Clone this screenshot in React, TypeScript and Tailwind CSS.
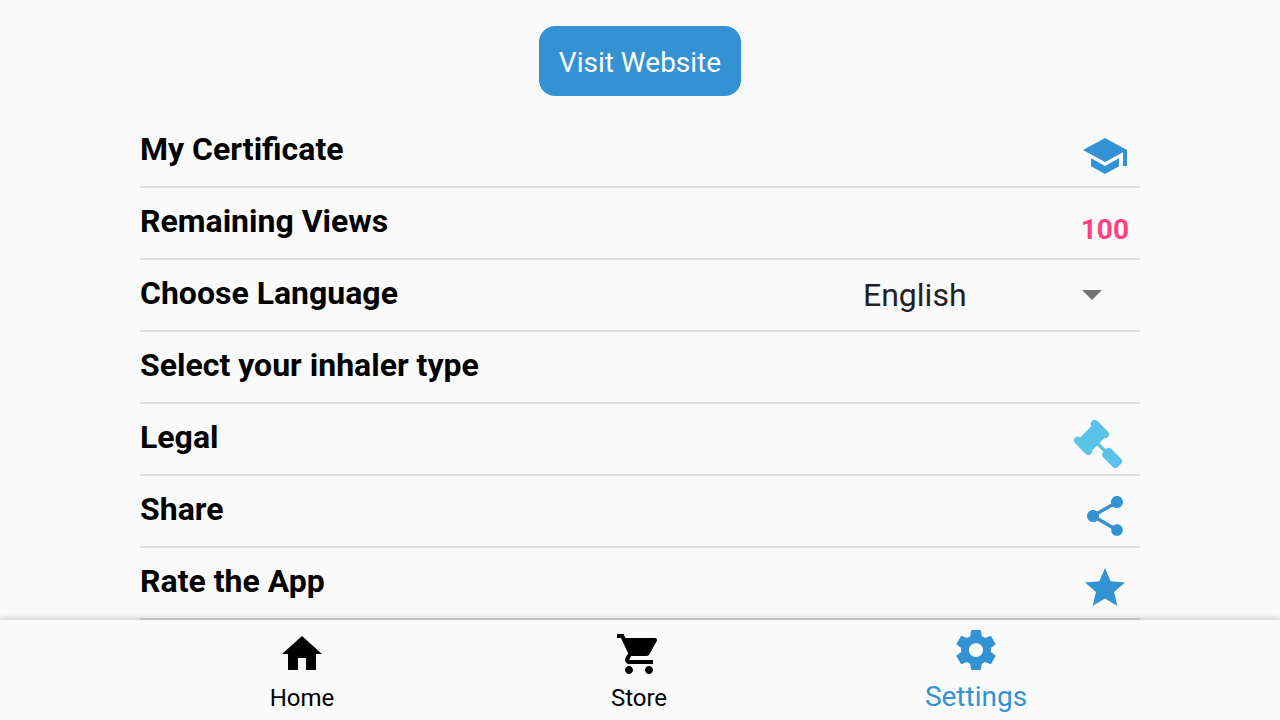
import { useState, type ReactNode } from "react";

const icons = {
  school:
    "M5 13.18v4L12 21l7-3.82v-4L12 17l-7-3.82zM12 3L1 9l11 6 9-4.91V17h2V9L12 3z",
  share:
    "M18 16.08c-.76 0-1.44.3-1.96.77L8.91 12.7c.05-.23.09-.46.09-.7s-.04-.47-.09-.7l7.05-4.11c.54.5 1.25.81 2.04.81 1.66 0 3-1.34 3-3s-1.34-3-3-3-3 1.34-3 3c0 .24.04.47.09.7L8.04 9.81C7.5 9.31 6.79 9 6 9c-1.66 0-3 1.34-3 3s1.34 3 3 3c.79 0 1.5-.31 2.04-.81l7.12 4.16c-.05.21-.08.43-.08.65 0 1.61 1.31 2.92 2.92 2.92 1.61 0 2.92-1.31 2.92-2.92s-1.31-2.92-2.92-2.92z",
  star: "M12 17.27L18.18 21l-1.64-7.03L22 9.24l-7.19-.61L12 2 9.19 8.63 2 9.24l5.46 4.73L5.82 21z",
  home: "M10 20v-6h4v6h5v-8h3L12 3 2 12h3v8z",
  cart: "M7 18c-1.1 0-1.99.9-1.99 2S5.9 22 7 22s2-.9 2-2-.9-2-2-2zM1 2v2h2l3.6 7.59-1.35 2.45c-.16.28-.25.61-.25.96 0 1.1.9 2 2 2h12v-2H7.42c-.14 0-.25-.11-.25-.25l.03-.12.9-1.63h7.45c.75 0 1.41-.41 1.75-1.03l3.58-6.49c.08-.14.12-.31.12-.48 0-.55-.45-1-1-1H5.21l-.94-2H1zm16 16c-1.1 0-1.99.9-1.99 2s.89 2 1.99 2 2-.9 2-2-.9-2-2-2z",
  settings:
    "M19.43 12.98c.04-.32.07-.64.07-.98s-.03-.66-.07-.98l2.11-1.65c.19-.15.24-.42.12-.64l-2-3.46c-.12-.22-.39-.3-.61-.22l-2.49 1c-.52-.4-1.08-.73-1.69-.98l-.38-2.65C14.46 2.18 14.25 2 14 2h-4c-.25 0-.46.18-.49.42l-.38 2.65c-.61.25-1.17.59-1.69.98l-2.49-1c-.23-.09-.49 0-.61.22l-2 3.46c-.13.22-.07.49.12.64l2.11 1.65c-.04.32-.07.65-.07.98s.03.66.07.98l-2.11 1.65c-.19.15-.24.42-.12.64l2 3.46c.12.22.39.3.61.22l2.49-1c.52.4 1.08.73 1.69.98l.38 2.65c.03.24.24.42.49.42h4c.25 0 .46-.18.49-.42l.38-2.65c.61-.25 1.17-.59 1.69-.98l2.49 1c.23.09.49 0 .61-.22l2-3.46c.12-.22.07-.49-.12-.64l-2.11-1.65zM12 15.5c-1.93 0-3.5-1.57-3.5-3.5s1.57-3.5 3.5-3.5 3.5 1.57 3.5 3.5-1.57 3.5-3.5 3.5z",
};

function Icon({ name }: { name: keyof typeof icons }) {
  return (
    <svg viewBox="0 0 24 24" className="size-12 shrink-0" fill="currentColor" aria-hidden="true">
      <path d={icons[name]} />
    </svg>
  );
}

function Gavel() {
  return (
    <svg viewBox="0 0 48 48" className="size-12 text-[#5bc2e9]" fill="currentColor" aria-hidden="true">
      <path d="M18 5.5 5.5 18 18 30.5 30.5 18z" />
      <g stroke="currentColor" strokeLinecap="round">
        <path d="M20.6 3.9 31.1 14.2M3.9 20.6 14.2 31.1" strokeWidth="7.8" />
        <path d="M23 23 32 32" strokeWidth="3.4" />
      </g>
      <rect x="27.6" y="32.1" width="21" height="11.8" rx="4" transform="rotate(45 38.1 38)" />
    </svg>
  );
}

function Row({ label, children }: { label: ReactNode; children?: ReactNode }) {
  return (
    <li className="flex h-18 shrink-0 items-start justify-between border-b-2 border-[#dadada]">
      <span className="pt-3.5 text-[32px] leading-[38px] font-bold text-black">{label}</span>
      {children}
    </li>
  );
}

function RowButton({ label, children }: { label: string; children: ReactNode }) {
  return (
    <button type="button" aria-label={label} className="mt-4 mr-[11px] text-[#3392d3]">
      {children}
    </button>
  );
}

export default function App() {
  const [language, setLanguage] = useState("English");

  return (
    <div className="flex h-screen flex-col bg-[#fafafa] font-['Roboto',sans-serif] text-black">
      <main className="flex min-h-0 flex-1 flex-col overflow-hidden">
        <div className="flex justify-center pt-[26px] pb-5">
          <a
            href="#website"
            className="rounded-2xl bg-[#3392d3] px-5 pt-[21px] pb-[17px] text-[28px] leading-8 text-white"
          >
            Visit Website
          </a>
        </div>
        <ul className="mx-[140px] flex flex-col">
          <Row label="My Certificate">
            <RowButton label="My Certificate">
              <Icon name="school" />
            </RowButton>
          </Row>
          <Row label="Remaining Views">
            <span className="mt-[25px] mr-[11px] text-[28px] leading-[34px] font-bold text-[#ff4081]">100</span>
          </Row>
          <Row label={<label htmlFor="language">Choose Language</label>}>
            <div className="relative mt-4 mr-5">
              <select
                id="language"
                value={language}
                onChange={(e) => setLanguage(e.target.value)}
                className="w-[257px] appearance-none bg-transparent text-[32px] leading-[38px] text-[#212121]"
              >
                <option>English</option>
              </select>
              <svg
                viewBox="0 0 20 10"
                className="pointer-events-none absolute top-3.5 right-[18px] h-2.5 w-5"
                fill="#737373"
                aria-hidden="true"
              >
                <path d="M0 0h20L10 10z" />
              </svg>
            </div>
          </Row>
          <Row label="Select your inhaler type" />
          <Row label="Legal">
            <button type="button" aria-label="Legal" className="mt-4 mr-[18px]">
              <Gavel />
            </button>
          </Row>
          <Row label="Share">
            <RowButton label="Share">
              <Icon name="share" />
            </RowButton>
          </Row>
          <Row label="Rate the App">
            <RowButton label="Rate the App">
              <Icon name="star" />
            </RowButton>
          </Row>
        </ul>
      </main>
      <nav className="relative z-10 flex h-[100px] shrink-0 justify-center bg-[#fafafa] pr-0.5 shadow-[0_0_8px_rgba(0,0,0,0.28)]">
        <a href="#home" className="flex w-[337px] flex-col items-center pt-2.5 text-[24px] leading-7">
          <Icon name="home" />
          <span className="mt-1.5">Home</span>
        </a>
        <a href="#store" className="flex w-[337px] flex-col items-center pt-2.5 text-[24px] leading-7">
          <Icon name="cart" />
          <span className="mt-1.5">Store</span>
        </a>
        <a
          href="#settings"
          aria-current="page"
          className="flex w-[337px] flex-col items-center pt-1.5 text-[28px] leading-[34px] text-[#3392d3]"
        >
          <Icon name="settings" />
          <span className="mt-1.5">Settings</span>
        </a>
      </nav>
    </div>
  );
}
